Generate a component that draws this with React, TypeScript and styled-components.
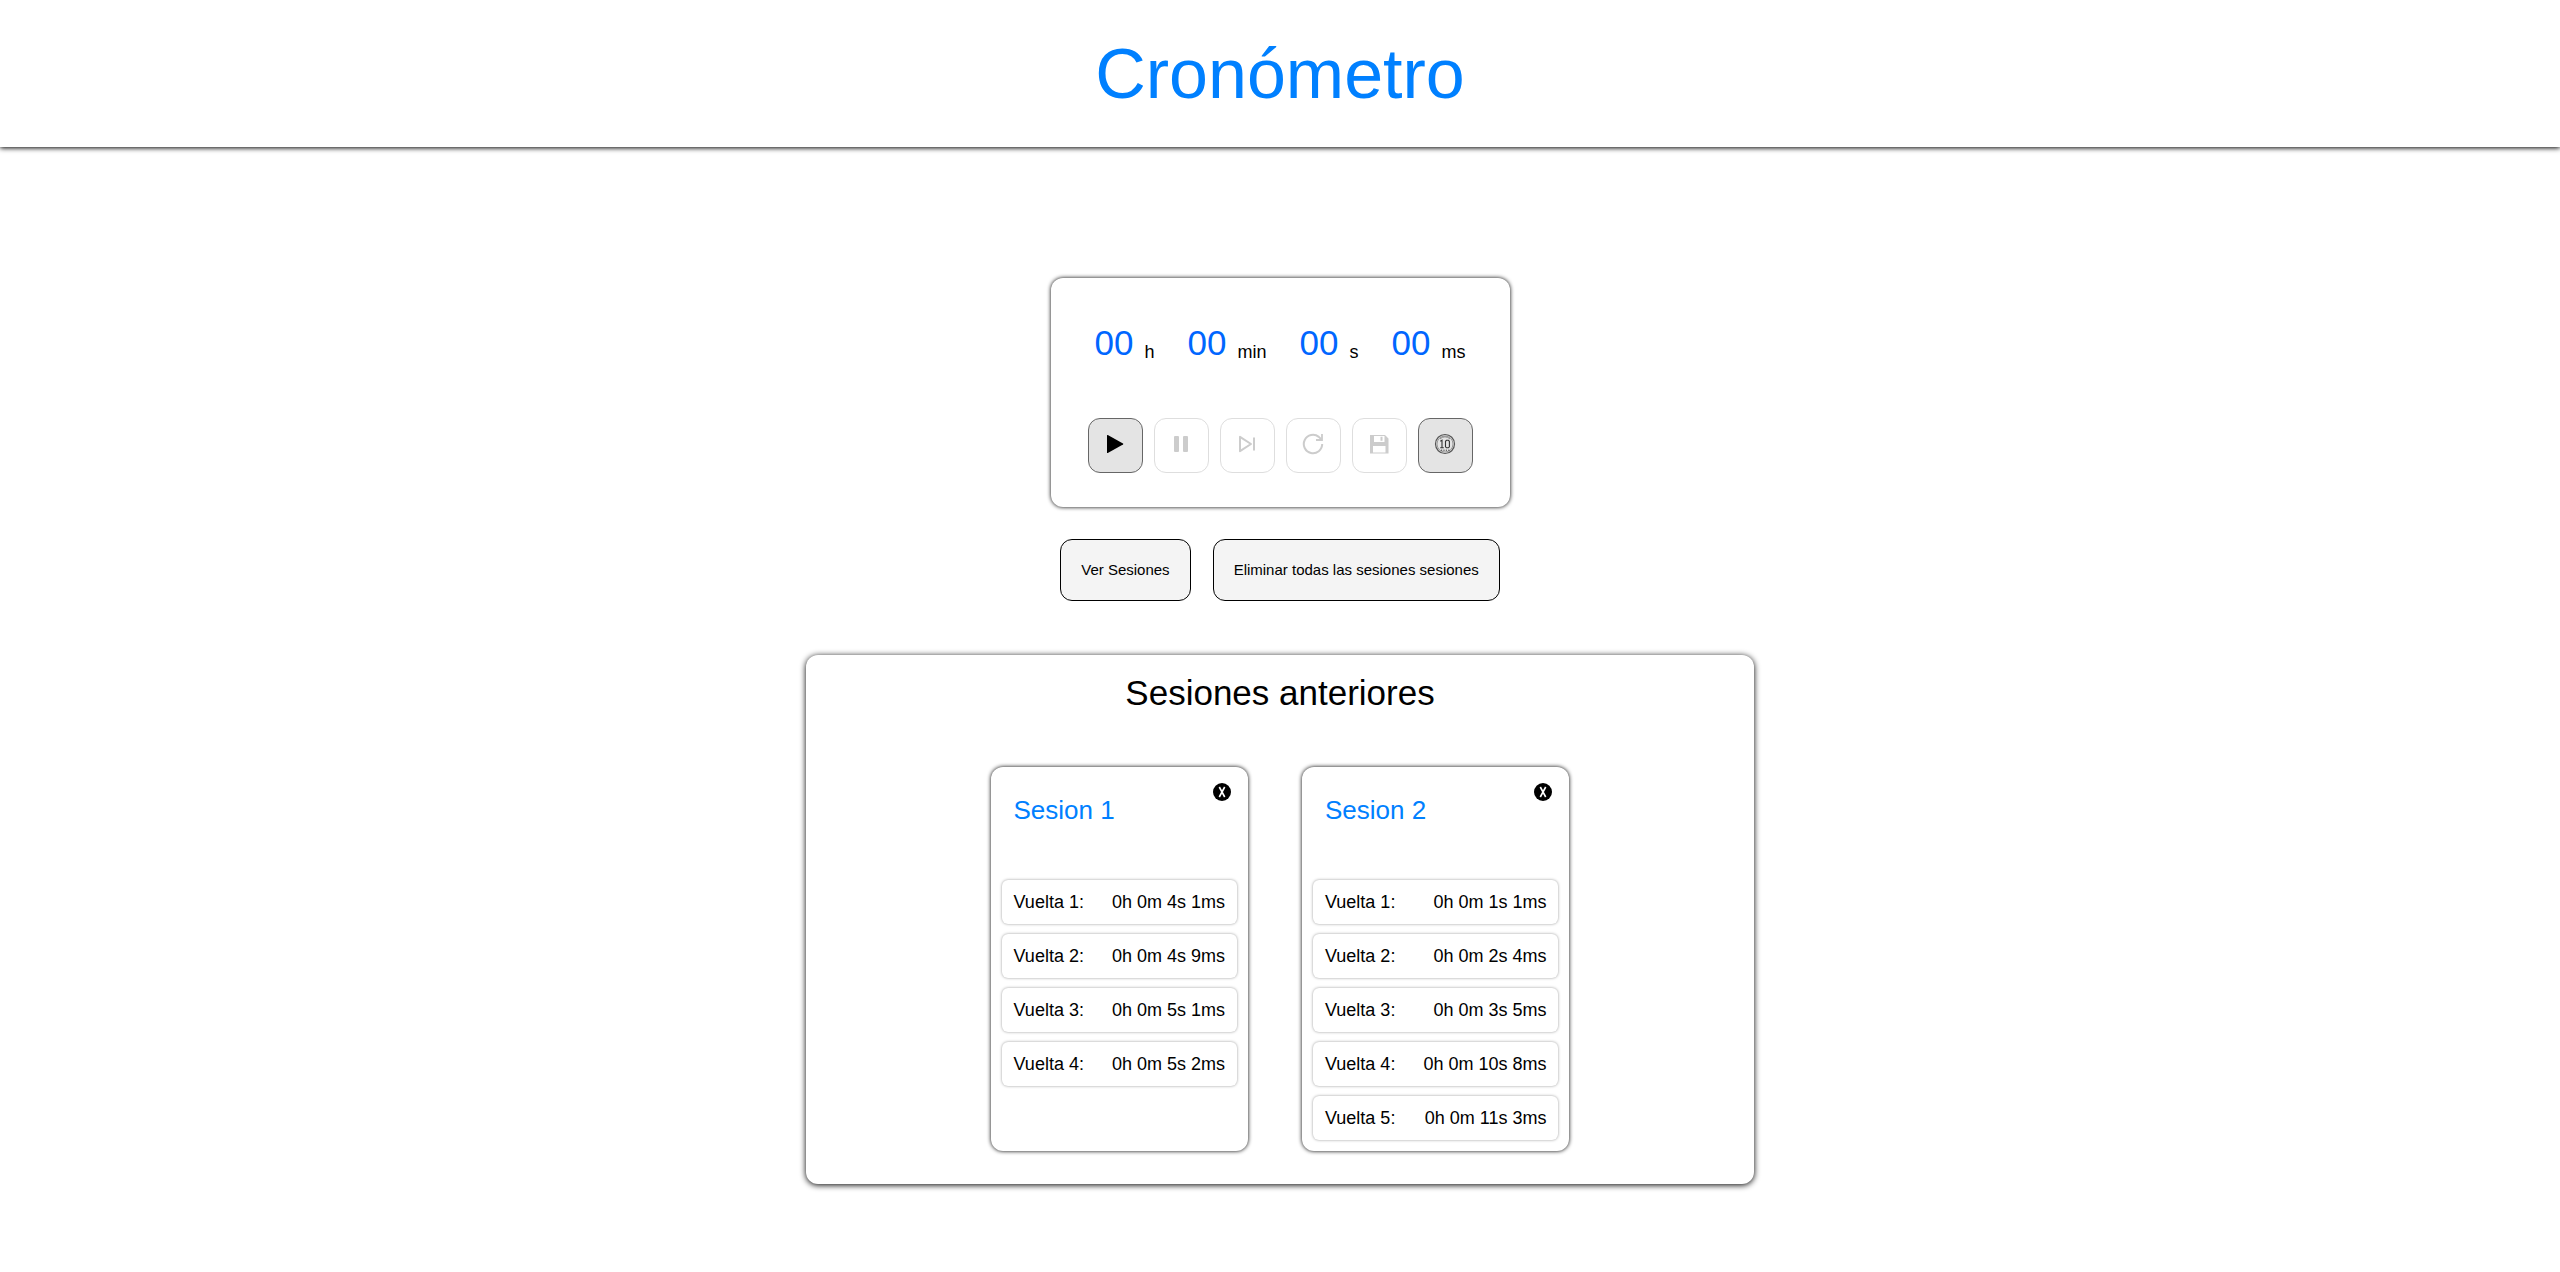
import React from "react";
import styled, { createGlobalStyle } from "styled-components";

const GlobalStyle = createGlobalStyle`
  * { box-sizing: border-box; }
  body {
    margin: 0;
    background: #fff;
    color: #000;
    font-family: Arial, "Liberation Sans", sans-serif;
    font-size: 18px;
    line-height: 22px;
  }
  h1, h2, h3, ul { margin: 0; padding: 0; font-weight: 400; }
  ul { list-style: none; }
  button { font-family: inherit; color: inherit; cursor: pointer; }
`;

const Header = styled.header`
  padding: 34px 16px 32px;
  text-align: center;
  box-shadow: 0 1px 5px #000;
`;

const Title = styled.h1`
  color: #0080ff;
  font-size: 70px;
  line-height: 81px;
`;

const Main = styled.main`
  display: flex;
  flex-direction: column;
  align-items: center;
  padding: 131px 0 80px;
`;

const Timer = styled.section`
  display: flex;
  flex-direction: column;
  align-items: center;
  gap: 55px;
  padding: 45px 37px 34px;
  border-radius: 12px;
  box-shadow: 0 0 4px #000;
`;

const Clock = styled.div`
  display: flex;
  align-items: flex-end;
  gap: 33px;
`;

const ClockPart = styled.div`
  display: flex;
  align-items: flex-end;
  gap: 11px;
`;

const Digits = styled.span`
  color: #0066ff;
  font-size: 35px;
  line-height: 40px;
`;

const Controls = styled.div`
  display: flex;
  gap: 11px;
`;

const IconButton = styled.button`
  display: grid;
  place-items: center;
  width: 55px;
  height: 55px;
  padding: 0 0 3px;
  border: 1px solid #666;
  border-radius: 12px;
  background: #e4e4e4;
  &:disabled {
    border-color: #dedede;
    background: #fff;
    color: #ccc;
    cursor: default;
  }
  svg { display: block; }
`;

const Actions = styled.div`
  display: flex;
  gap: 22px;
  margin: 32px 0 54px;
`;

const ActionButton = styled.button`
  padding: 20px;
  border: 1px solid #000;
  border-radius: 12px;
  background: #f4f4f4;
  font-size: 15px;
  line-height: 20px;
`;

const Sessions = styled.section`
  width: 37%;
  min-width: 640px;
  padding: 18px 24px 33px;
  border-radius: 12px;
  box-shadow: 0 1px 6px #000;
`;

const SessionsTitle = styled.h2`
  font-size: 35px;
  line-height: 40px;
  text-align: center;
`;

const SessionList = styled.div`
  display: flex;
  justify-content: center;
  gap: 54px;
  margin-top: 54px;
`;

const Card = styled.article`
  padding: 16px 11px 11px;
  border-radius: 12px;
  box-shadow: 0 0 4px #000;
`;

const CardHeader = styled.header`
  display: flex;
  justify-content: space-between;
  align-items: flex-start;
  height: 97px;
  padding: 0 6px 0 12px;
`;

const CardTitle = styled.h3`
  padding-top: 12px;
  color: #0080ff;
  font-size: 26px;
  line-height: 30px;
`;

const CloseButton = styled.button`
  display: block;
  padding: 0;
  border: 0;
  background: none;
  svg { display: block; }
`;

const Laps = styled.ul`
  display: grid;
  gap: 10px;
`;

const Lap = styled.li`
  display: flex;
  justify-content: space-between;
  gap: 28px;
  padding: 11px 12px;
  border-radius: 6px;
  box-shadow: 0 0 3px #999;
`;

const icons = {
  play: (
    <svg width="20" height="20" viewBox="0 0 20 20" fill="currentColor">
      <path d="M2 1.5v17q0 .8.8.4L18 10.5q.8-.5 0-1L2.8 1.100Q2 .7 2 1.500z" />
    </svg>
  ),
  pause: (
    <svg width="20" height="20" viewBox="0 0 20 20" fill="currentColor">
      <rect x="3" y="2" width="5" height="16" rx="1" />
      <rect x="12" y="2" width="5" height="16" rx="1" />
    </svg>
  ),
  next: (
    <svg width="20" height="20" viewBox="0 0 20 20" fill="none" stroke="currentColor" strokeWidth="2" strokeLinejoin="round">
      <path d="M3 2.800v14.400L14 10z" />
      <path d="M17 3.500v13" />
    </svg>
  ),
  reset: (
    <svg width="22" height="22" viewBox="0 0 22 22" fill="none" stroke="currentColor" strokeWidth="2">
      <path d="M20.200 11a9.200 9.200 0 1 1-3.400-7.100l2.200 2.100" />
      <path d="M20 1v6h-6" strokeWidth="1.800" />
    </svg>
  ),
  save: (
    <svg width="20" height="20" viewBox="0 0 20 20" fill="currentColor" fillRule="evenodd">
      <path d="M1 1h15l3.500 3.500V19.500H1zM5 2v6h10.500V2zM4 12V18.500h12.500V12zM11.500 2.800h2v4h-2z" />
    </svg>
  ),
  ten: (
    <svg width="22" height="22" viewBox="0 0 22 22" fill="none" stroke="#333">
      <circle cx="11" cy="11" r="9.500" stroke="#555" strokeWidth="1.200" />
      <circle cx="11" cy="11" r="8" stroke="#999" strokeWidth="1" />
      <path d="M6 6a6.800 6.800 0 0 1 10 0" stroke="#888" />
      <path d="M7 17.200h8.400" strokeDasharray="1.200 1.200" />
      <path d="M6.300 8.300l1.700-1V14.500M6.200 14.800h3.600" strokeWidth="1.100" />
      <path d="M12.500 7.300h1.900l1 1v5.500l-1 1h-1.900l-1-1V8.300z" strokeWidth="1.100" />
    </svg>
  ),
};

const controls = [
  { label: "Iniciar", icon: icons.play, disabled: false },
  { label: "Pausar", icon: icons.pause, disabled: true },
  { label: "Vuelta", icon: icons.next, disabled: true },
  { label: "Reiniciar", icon: icons.reset, disabled: true },
  { label: "Guardar", icon: icons.save, disabled: true },
  { label: "Cuenta de diez", icon: icons.ten, disabled: false },
];

const sessions = [
  { name: "Sesion 1", laps: ["0h 0m 4s 1ms", "0h 0m 4s 9ms", "0h 0m 5s 1ms", "0h 0m 5s 2ms"] },
  { name: "Sesion 2", laps: ["0h 0m 1s 1ms", "0h 0m 2s 4ms", "0h 0m 3s 5ms", "0h 0m 10s 8ms", "0h 0m 11s 3ms"] },
];

export default function App() {
  return (
    <>
      <GlobalStyle />
      <Header>
        <Title>Cronómetro</Title>
      </Header>
      <Main>
        <Timer>
          <Clock>
            {["h", "min", "s", "ms"].map((unit) => (
              <ClockPart key={unit}>
                <Digits>00</Digits>
                <span>{unit}</span>
              </ClockPart>
            ))}
          </Clock>
          <Controls>
            {controls.map((c) => (
              <IconButton key={c.label} type="button" aria-label={c.label} disabled={c.disabled}>
                {c.icon}
              </IconButton>
            ))}
          </Controls>
        </Timer>
        <Actions>
          <ActionButton type="button">Ver Sesiones</ActionButton>
          <ActionButton type="button">Eliminar todas las sesiones sesiones</ActionButton>
        </Actions>
        <Sessions>
          <SessionsTitle>Sesiones anteriores</SessionsTitle>
          <SessionList>
            {sessions.map((s) => (
              <Card key={s.name}>
                <CardHeader>
                  <CardTitle>{s.name}</CardTitle>
                  <CloseButton type="button" aria-label={`Eliminar ${s.name}`}>
                    <svg width="18" height="18" viewBox="0 0 18 18">
                      <circle cx="9" cy="9" r="9" fill="#000" />
                      <path d="M6.300 4l5.400 10M11.700 4L6.300 14" stroke="#fff" strokeWidth="1.600" />
                    </svg>
                  </CloseButton>
                </CardHeader>
                <Laps>
                  {s.laps.map((time, i) => (
                    <Lap key={i}>
                      <span>Vuelta {i + 1}:</span>
                      <span>{time}</span>
                    </Lap>
                  ))}
                </Laps>
              </Card>
            ))}
          </SessionList>
        </Sessions>
      </Main>
    </>
  );
}
